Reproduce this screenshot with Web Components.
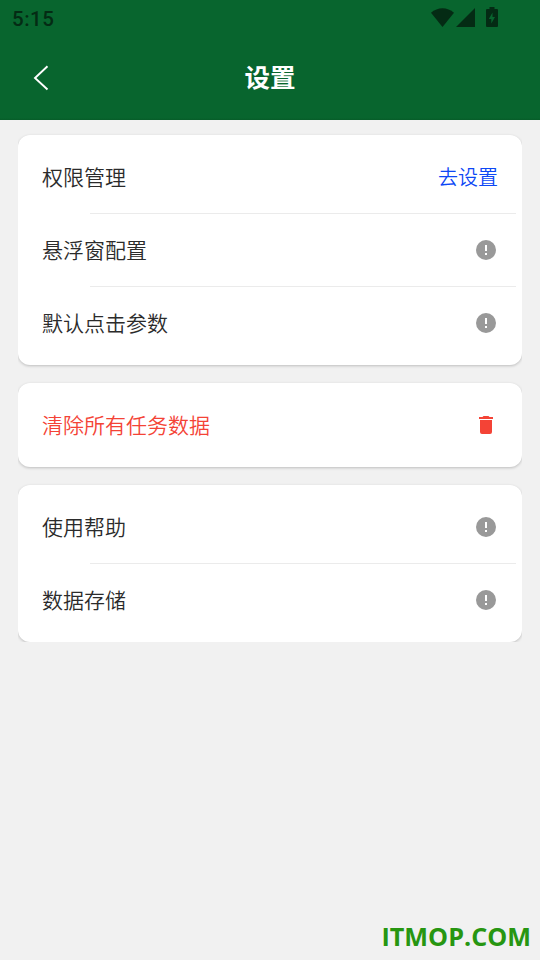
<!DOCTYPE html>
<html lang="zh-CN">
<head>
<meta charset="utf-8">
<title>设置</title>
<style>
html,body{margin:0;height:100%;background:#f1f1f1}
</style>
</head>
<body>
<settings-page></settings-page>
<script>
const define = (name, html) => customElements.define(name, class extends HTMLElement {
  constructor() {
    super();
    const t = document.createElement('template');
    t.innerHTML = html;
    this.attachShadow({mode: 'open'}).append(t.content.cloneNode(true));
  }
});

define('status-bar', `
<style>
:host{display:flex;box-sizing:border-box;height:36px;padding:0 41px 0 12px;justify-content:space-between;color:#042b14}
time{font:500 20.500px/38px Roboto,sans-serif;letter-spacing:.5px}
svg{display:block;width:70px;height:36px}
</style>
<time>5:15</time>
<svg viewBox="429 0 70 36" fill="currentColor">
<path d="M442.5 27 431 12.8C437.5 6.6 447.500 6.600 454 12.800Z"/>
<path d="M475 8V27H456Z"/>
<path fill-rule="evenodd" d="M489.500 7H494.500V9H497Q498 9 498 10V26Q498 27 497 27H487Q486 27 486 26V10Q486 9 487 9H489.500ZM492.500 12.500 488.800 19H491.300V23.500L495 17H492.500Z"/>
</svg>`);

define('title-bar', `
<style>
:host{display:grid;grid-template-columns:80px 1fr 80px;height:84px;align-items:center;color:#fff}
svg{width:80px;height:84px;display:block}
h1{margin:0;padding-bottom:4px;text-align:center;font:700 25.500px/38px "Noto Sans CJK SC",sans-serif}
</style>
<svg viewBox="0 36 80 84" fill="none" stroke="#fff" stroke-width="1.900"><path d="M47.500 66.300 35 78 47.500 89.500"/></svg>
<h1><slot></slot></h1>`);

define('info-icon', `
<style>:host{display:block;width:24px;height:24px}svg{display:block}</style>
<svg width="24" height="24" viewBox="0 0 24 24"><path fill="#999" fill-rule="evenodd" d="M12 2a10 10 0 1 0 0 20 10 10 0 0 0 0-20ZM11 7h2v6h-2ZM11 15h2v2h-2Z"/></svg>`);

define('trash-icon', `
<style>:host{display:block;width:24px;height:24px}svg{display:block}</style>
<svg width="24" height="24" viewBox="0 0 24 24" fill="#f44336"><path d="M6 7h12v12q0 2-2 2H8q-2 0-2-2ZM5 4h3.500l1-1h5l1 1H19v2H5Z"/></svg>`);

define('setting-row', `
<style>
:host{display:flex;height:72px;align-items:center;justify-content:space-between;padding:0 24px;color:#2b2b2b;font:350 21px/30px "Noto Sans CJK SC DemiLight","Noto Sans CJK SC",sans-serif}
:host([danger]){color:#f44336}
span{padding-bottom:2px}
::slotted(a){color:#0d47f5;font-size:20px;font-weight:400}
</style>
<span><slot></slot></span><slot name="end"></slot>`);

define('row-divider', `<style>:host{display:block;height:1px;margin:0 6px 0 72px;background:#ebebeb}</style>`);

define('setting-card', `
<style>:host{display:block;padding:6px 0;background:#fff;border-radius:12px;box-shadow:0 1px 3px rgba(0,0,0,.22)}</style>
<slot></slot>`);

define('site-mark', `
<style>:host{display:block;color:#279611;font:700 25.200px/36px "Open Sans",sans-serif;white-space:nowrap}</style>
<slot></slot>`);

define('settings-page', `
<style>
:host{display:flex;flex-direction:column;box-sizing:border-box;height:960px;background:#f1f1f1}
header{background:linear-gradient(#08652e 118px,#075c29);height:120px}
main{display:flex;flex-direction:column;gap:18px;margin:0 18px;padding-top:15px;overflow:hidden;flex:none}
footer{margin-top:auto;align-self:flex-end;padding:0 9px 6px 0}
</style>
<header><status-bar></status-bar><title-bar>设置</title-bar></header>
<main>
<setting-card>
<setting-row>权限管理<a slot="end">去设置</a></setting-row><row-divider></row-divider>
<setting-row>悬浮窗配置<info-icon slot="end"></info-icon></setting-row><row-divider></row-divider>
<setting-row>默认点击参数<info-icon slot="end"></info-icon></setting-row>
</setting-card>
<setting-card><setting-row danger>清除所有任务数据<trash-icon slot="end"></trash-icon></setting-row></setting-card>
<setting-card>
<setting-row>使用帮助<info-icon slot="end"></info-icon></setting-row><row-divider></row-divider>
<setting-row>数据存储<info-icon slot="end"></info-icon></setting-row>
</setting-card>
</main>
<footer><site-mark>ITMOP.COM</site-mark></footer>`);
</script>
</body>
</html>
